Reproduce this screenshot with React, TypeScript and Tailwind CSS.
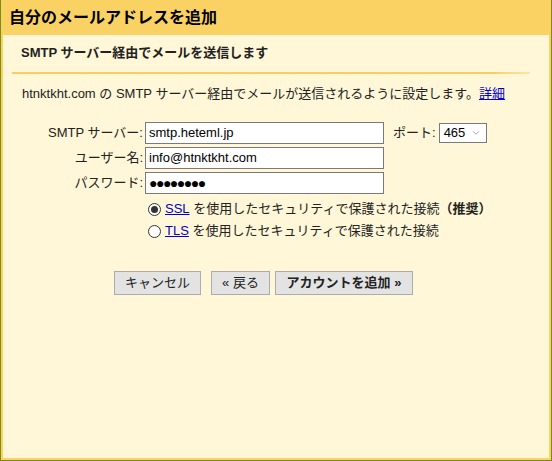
import { ChevronDown } from 'lucide-react';

const FONT = '[font-family:"Liberation_Sans","Noto_Sans_CJK_JP",sans-serif]';

function Field({ label, value, password }: { label: string; value: string; password?: boolean }) {
  return (
    <div className="flex items-center h-[22px]">
      <span className="w-[123px] text-right pr-[2px] text-[13px] text-[#222]">{label}</span>
      <div className="w-[239px] h-[22px] border border-[#7a7a7a] bg-white flex items-center px-[3px] text-[13px] text-black">
        {password ? <span className="tracking-[-1.5px] text-[14px] leading-none">●●●●●●●●</span> : value}
      </div>
    </div>
  );
}

function Radio({ checked }: { checked?: boolean }) {
  return (
    <span className="w-[13px] h-[13px] rounded-full border border-[#333] bg-white flex items-center justify-center mr-[4px]">
      {checked && <span className="w-[7px] h-[7px] rounded-full bg-[#333]" />}
    </span>
  );
}

export default function App() {
  return (
    <div className={`w-[552px] h-[461px] flex flex-col border-x border-b border-[#7d8c12] ${FONT}`}>
      <div className="h-[35px] bg-[#fad264] flex items-center pl-[8px] shrink-0">
        <h1 className="text-[16px] font-bold text-black">自分のメールアドレスを追加</h1>
      </div>
      <div className="flex-1 bg-[#fff7d7] border-x-2 border-b-2 border-[#fad264] flex flex-col">
        <div className="pl-[18px] pt-[8px] h-[37px] text-[13px] font-bold text-[#222]">SMTP サーバー経由でメールを送信します</div>
        <div className="ml-[9px] mr-[19px] h-[2px] bg-gradient-to-r from-[#f8cf5e] from-[93%] to-[#fde7a8]" />
        <p className="pl-[19px] pt-[10px] text-[13px] text-[#222]">
          htnktkht.com の SMTP サーバー経由でメールが送信されるように設定します。
          <a className="text-[#0000cc] underline cursor-pointer">詳細</a>
        </p>
        <div className="pl-[19px] pt-[18px] flex flex-col gap-[3px]">
          <div className="flex items-center">
            <Field label="SMTP サーバー:" value="smtp.heteml.jp" />
            <span className="ml-[9px] text-[13px] text-[#222]">ポート:</span>
            <div className="ml-[3px] w-[48px] h-[20px] border border-[#7a7a7a] bg-white flex items-center justify-between pl-[4px] pr-[5px] text-[13px]">
              465
              <ChevronDown size={10} strokeWidth={1.25} className="text-[#555]" />
            </div>
          </div>
          <Field label="ユーザー名:" value="info@htnktkht.com" />
          <Field label="パスワード:" value="" password />
        </div>
        <div className="pl-[145px] pt-[7px] flex flex-col gap-[5px] text-[13px] text-[#222]">
          <label className="flex items-center h-[17px]">
            <Radio checked />
            <a className="text-[#0000cc] underline">SSL</a>
            <span>&nbsp;を使用したセキュリティで保護された接続</span>
            <span className="font-bold">（推奨）</span>
          </label>
          <label className="flex items-center h-[17px]">
            <Radio />
            <a className="text-[#0000cc] underline">TLS</a>
            <span>&nbsp;を使用したセキュリティで保護された接続</span>
          </label>
        </div>
        <div className="pl-[111px] pt-[31px] flex text-[13px] text-[#222]">
          <button className="h-[24px] w-[87px] bg-[#e3e3e3] border border-[#acacac]">キャンセル</button>
          <button className="ml-[10px] h-[24px] w-[59px] bg-[#e3e3e3] border border-[#acacac]">« 戻る</button>
          <button className="ml-[5px] h-[24px] w-[138px] bg-[#e3e3e3] border border-[#acacac] font-bold">アカウントを追加 »</button>
        </div>
      </div>
    </div>
  );
}
